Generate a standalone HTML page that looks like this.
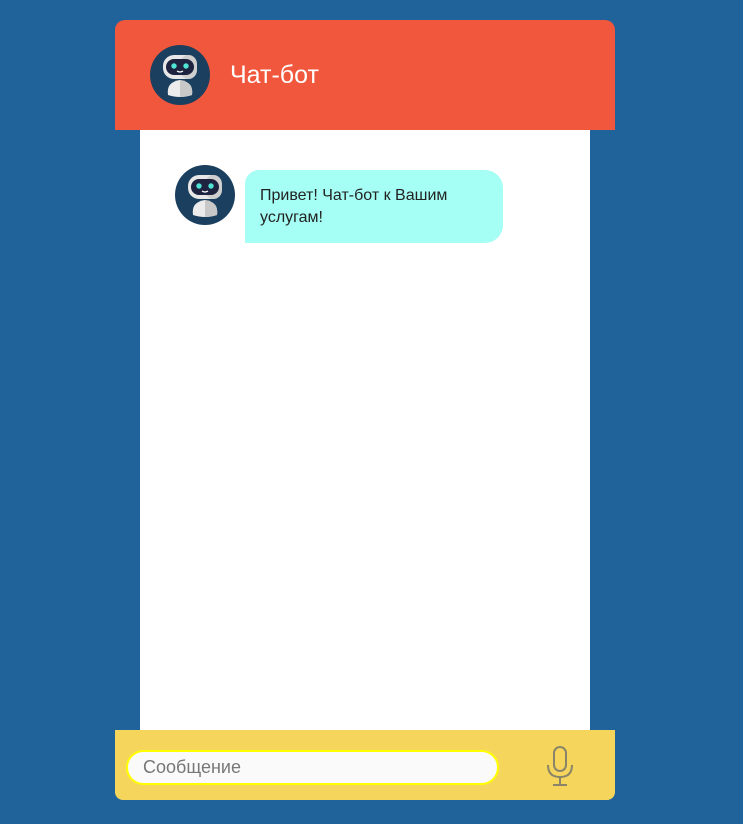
<!DOCTYPE html>
<html><head><meta charset="utf-8"><style>
html,body{margin:0;padding:0}
body{width:743px;height:824px;background:#20639b;position:relative;font-family:"Liberation Sans",sans-serif;overflow:hidden}
.hdr{position:absolute;left:115px;top:20px;width:500px;height:110px;background:#f0573c;border-radius:10px 10px 0 0}
.hdr .av{position:absolute;left:35px;top:25px}
.hdr .t{position:absolute;left:115px;top:40px;color:#fff;font-size:25px;line-height:30px}
.main{position:absolute;left:140px;top:130px;width:450px;height:600px;background:#fff}
.main .av{position:absolute;left:35px;top:35px}
.bub{position:absolute;left:105px;top:40px;width:258px;height:73px;background:#a6fff4;border-radius:14px 18px 18px 0;box-sizing:border-box;padding:15px 15px;font-size:16px;line-height:22px;color:#222}
.ftr{position:absolute;left:115px;top:730px;width:500px;height:70px;background:#f6d55c;border-radius:0 0 8px 8px}
.inp{position:absolute;left:11px;top:20px;width:373px;height:35px;box-sizing:border-box;border:2px solid #ffff00;border-radius:18px;background:#fafafa;color:#777;font-size:18px;line-height:31px;padding-left:15px}
.mic{position:absolute;left:430px;top:15px}
</style></head><body>
<svg width="0" height="0" style="position:absolute"><defs>
<symbol id="bot" viewBox="0 0 60 60">
<circle cx="30" cy="30" r="30" fill="#1b3f5e"/>
<rect x="13" y="10" width="34" height="24" rx="11" fill="#e8e8e8"/>
<rect x="30" y="10" width="17" height="24" rx="9" fill="#cfcfcf"/>
<rect x="16" y="14" width="28" height="16" rx="8" fill="#1e2340"/>
<circle cx="24" cy="21" r="2.7" fill="#4fe3d6"/>
<circle cx="36" cy="21" r="2.7" fill="#4fe3d6"/>
<path d="M27 26 Q30 28 33 26" stroke="#fff" stroke-width="1.3" fill="none"/>
<path d="M18 50 Q16 37 30 35 Q44 37 42 50 Q30 54 18 50Z" fill="#ececec"/>
<path d="M30 35 Q44 37 42 50 Q36 52 30 52Z" fill="#c8c8c8"/>
</symbol></defs></svg>
<div class="hdr"><svg class="av" width="60" height="60"><use href="#bot"/></svg><div class="t">Чат-бот</div></div>
<div class="main"><svg class="av" width="60" height="60"><use href="#bot"/></svg>
<div class="bub">Привет! Чат-бот к Вашим услугам!</div></div>
<div class="ftr"><div class="inp">Сообщение</div>
<svg class="mic" width="30" height="42" viewBox="0 0 30 42" fill="none" stroke="#8a8568" stroke-width="2">
<rect x="9" y="2" width="12" height="24" rx="6"/>
<path d="M3 20 Q3 32 15 32 Q27 32 27 20"/><path d="M15 32 V39 M8 40 H22"/>
</svg></div>
</body></html>
